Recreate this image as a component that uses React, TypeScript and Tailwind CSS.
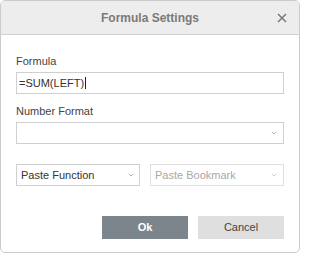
import React from "react";

const Chevron = ({ color = "#9a9a9a" }: { color?: string }) => (
  <svg width="6" height="4" viewBox="0 0 6 4" className="shrink-0">
    <path d="M0.8 0.8 L3 3 L5.2 0.8" fill="none" stroke={color} strokeWidth="0.8" />
  </svg>
);

export default function App() {
  return (
    <div
      className="w-[300px] h-[253px] bg-white border border-[#cbcbcb] rounded-[5px] flex flex-col overflow-hidden"
      style={{ fontFamily: '"Liberation Sans", Arial, sans-serif' }}
    >
      <div className="h-[34px] shrink-0 bg-[#ededed] border-b border-[#d2d2d2] flex items-center justify-center relative">
        <span className="text-[12px] font-bold text-[#7a7a7a] leading-[14px]">Formula Settings</span>
        <svg
          width="10"
          height="10"
          viewBox="0 0 10 10"
          className="absolute right-[12px] top-[12px]"
        >
          <path d="M1 1 L9 9 M9 1 L1 9" stroke="#777" strokeWidth="1.5" />
        </svg>
      </div>
      <div className="flex-1 flex flex-col px-[15px] pt-[20px] text-[11px] text-[#444]">
        <div className="h-[13px] leading-[13px]">Formula</div>
        <div className="mt-[4px] h-[22px] border border-[#cfcfcf] flex items-center pl-[2px] text-[#333]">
          <span className="leading-[13px]">=SUM(LEFT)</span>
          <span className="w-px h-[12px] bg-[#222] ml-[1px]" />
        </div>
        <div className="mt-[11px] h-[13px] leading-[13px]">Number Format</div>
        <div className="mt-[4px] h-[22px] border border-[#cfcfcf] flex items-center justify-end pr-[6px]">
          <Chevron />
        </div>
        <div className="mt-[20px] flex gap-[10px]">
          <div className="w-[124px] h-[22px] border border-[#cfcfcf] flex items-center justify-between pl-[4px] pr-[5px] text-[#333]">
            <span className="leading-[13px]">Paste Function</span>
            <Chevron />
          </div>
          <div className="flex-1 h-[22px] border border-[#e0e0e0] flex items-center justify-between pl-[4px] pr-[6px] text-[#a8a8a8]">
            <span className="leading-[13px]">Paste Bookmark</span>
            <Chevron color="#c4c4c4" />
          </div>
        </div>
        <div className="mt-[30px] flex justify-end gap-[10px]">
          <button className="w-[86px] h-[23px] bg-[#7d858c] text-white font-bold text-[11px] flex items-center justify-center">
            Ok
          </button>
          <button className="w-[86px] h-[23px] bg-[#dfdfdf] text-[#444] text-[11px] flex items-center justify-center">
            Cancel
          </button>
        </div>
      </div>
    </div>
  );
}
